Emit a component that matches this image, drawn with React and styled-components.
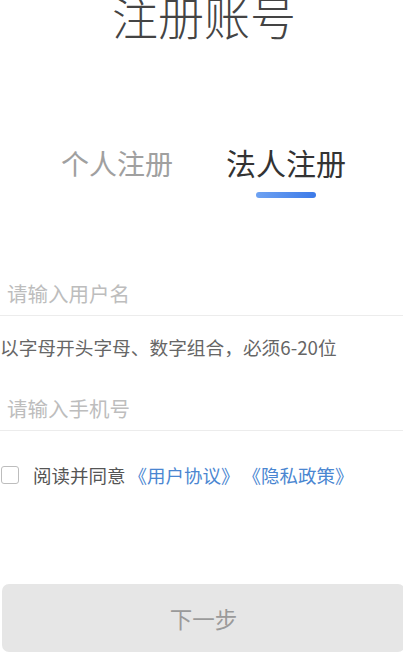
import React, { useState } from "react";
import styled, { createGlobalStyle } from "styled-components";

const Global = createGlobalStyle`
  html, body { margin: 0; padding: 0; background: #fff; }
  body { font-family: "Noto Sans CJK SC", "Noto Sans", sans-serif; overflow: hidden; }
  * { box-sizing: border-box; }
`;

const Page = styled.div`
  width: 403px;
  height: 656px;
  display: flex;
  flex-direction: column;
  overflow: hidden;
`;

const Title = styled.h1`
  margin: -11px 0 0 0;
  padding-left: 5px;
  font-size: 46px;
  line-height: 52px;
  font-weight: 300;
  color: #444;
  text-align: center;
`;

const Tabs = styled.div`
  display: flex;
  justify-content: center;
  margin-top: 101px;
`;

const Tab = styled.div`
  width: 169px;
  display: flex;
  flex-direction: column;
  align-items: center;
  font-size: ${(p) => (p.$active ? "30px" : "28px")};
  line-height: 40px;
  color: ${(p) => (p.$active ? "#333" : "#a0a0a0")};
  margin-top: ${(p) => (p.$active ? "0" : "1px")};
`;

const Bar = styled.div`
  width: 60px;
  height: 6px;
  border-radius: 3px;
  margin-top: 10px;
  background: ${(p) => (p.$show ? "linear-gradient(90deg, #6ea2f2, #3c7ae8)" : "transparent")};
`;

const Form = styled.div`
  display: flex;
  flex-direction: column;
  margin-top: 71px;
`;

const Field = styled.div`
  height: 46px;
  border-bottom: 1px solid #ececec;
  display: flex;
  align-items: center;
  padding-left: 7px;
  font-size: 20.5px;
  color: #bdbdbd;
`;

const Hint = styled.div`
  margin-top: 18px;
  font-size: 18.7px;
  line-height: 26px;
  color: #666;
  margin-bottom: 25px;
  white-space: nowrap;
`;

const Agree = styled.div`
  display: flex;
  align-items: center;
  margin-top: 33px;
  font-size: 18.5px;
  line-height: 22px;
  color: #555;
`;

const Box = styled.div`
  width: 18px;
  height: 18px;
  border: 1.5px solid #bdbdbd;
  border-radius: 3px;
  margin-left: 1px;
  margin-right: 14px;
`;

const Link = styled.span`
  color: #4a86d1;
  margin-left: ${(p) => p.$gap || 0}px;
`;

const Button = styled.button`
  margin-top: 98px;
  margin-left: 2px;
  width: 403px;
  height: 68px;
  flex-shrink: 0;
  border: none;
  border-radius: 7px;
  background: #e6e6e6;
  color: #9a9a9a;
  font-family: inherit;
  font-size: 22.5px;
`;

export default function App() {
  const [tab] = useState(1);
  return (
    <>
      <Global />
      <Page>
        <Title>注册账号</Title>
        <Tabs>
          <Tab $active={tab === 0}>
            个人注册
            <Bar $show={tab === 0} />
          </Tab>
          <Tab $active={tab === 1}>
            法人注册
            <Bar $show={tab === 1} />
          </Tab>
        </Tabs>
        <Form>
          <Field>请输入用户名</Field>
          <Hint>以字母开头字母、数字组合，必须6-20位</Hint>
          <Field>请输入手机号</Field>
          <Agree>
            <Box />
            阅读并同意<Link $gap={3}>《用户协议》</Link>
            <Link $gap={3}>《隐私政策》</Link>
          </Agree>
        </Form>
        <Button>下一步</Button>
      </Page>
    </>
  );
}
